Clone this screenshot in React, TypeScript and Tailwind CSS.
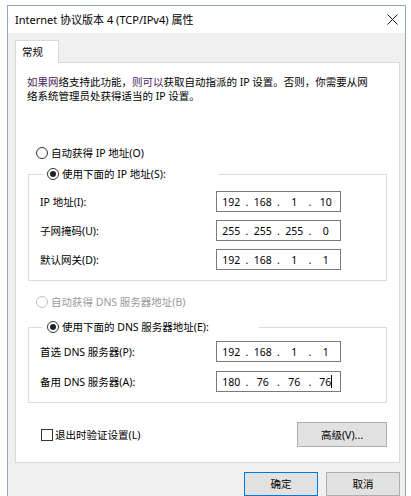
import React from "react";

const FONT = { fontFamily: "'Noto Sans', 'Noto Sans CJK SC', sans-serif" };

function Radio({ checked, disabled }: { checked?: boolean; disabled?: boolean }) {
  return (
    <span
      className={
        "flex items-center justify-center w-[12px] h-[12px] rounded-full border bg-white shrink-0 " +
        (disabled ? "border-[#c4c4c4]" : "border-[#333333]")
      }
    >
      {checked && <span className="w-[6px] h-[6px] rounded-full bg-[#222222]" />}
    </span>
  );
}

function IpBox({ parts, cursor }: { parts: string[]; cursor?: boolean }) {
  return (
    <div className="w-[125px] h-[21px] border border-[#7a7a7a] bg-white flex items-center px-[2px]">
      {parts.map((p, i) => (
        <React.Fragment key={i}>
          <span className="flex-1 text-center leading-[14px] relative">
            {p}
            {cursor && i === parts.length - 1 && (
              <span className="inline-block w-px h-[13px] bg-black align-middle -mt-[2px]" />
            )}
          </span>
          {i < parts.length - 1 && <span className="w-[7px] text-center leading-[14px]">.</span>}
        </React.Fragment>
      ))}
    </div>
  );
}

function Row({ label, parts, cursor }: { label: string; parts: string[]; cursor?: boolean }) {
  return (
    <div className="flex items-center h-[21px]">
      <span className="w-[176px] leading-[14px]">{label}</span>
      <IpBox parts={parts} cursor={cursor} />
    </div>
  );
}

export default function App() {
  return (
    <div
      className="w-[411px] h-[496px] overflow-hidden bg-white pt-[5px] pl-[7px] pr-[5px] text-[10.5px] text-black"
      style={FONT}
    >
      <div className="border-x border-t border-[#8ea6be] h-[520px] flex flex-col">
        {/* title bar */}
        <div className="h-[27px] bg-white flex items-center justify-between pl-[7px] pr-[7px] shrink-0">
          <span className="text-[11px] leading-[14px]">Internet 协议版本 4 (TCP/IPv4) 属性</span>
          <svg width="11" height="11" viewBox="0 0 11 11">
            <path d="M0.5 0.5 L10.5 10.5 M10.5 0.5 L0.5 10.5" stroke="#111" strokeWidth="1" fill="none" />
          </svg>
        </div>
        {/* body */}
        <div className="flex-1 bg-[#f0f0f0] pl-[7px] pr-[5px] pt-[7px] flex flex-col">
          <div className="flex">
            <div className="w-[44px] h-[23px] border-x border-t border-[#d9d9d9] bg-white -mb-px relative z-10 flex items-center pl-[6px]">
              <span className="leading-[14px]">常规</span>
            </div>
          </div>
          <div className="h-[401px] border border-[#d9d9d9] bg-white flex flex-col">
            <div className="mt-[12px] pl-[11px] pr-[8px] flex flex-col">
              <div className="leading-[14px] flex whitespace-nowrap">
                <span className="text-[#4a2158]">如果网</span>
                <span>络支持此功能，</span>
                <span className="text-[#4a2158]">则可以</span>
                <span>获取自动指派的 IP 设置。否则，你需要从网</span>
              </div>
              <div className="leading-[14px] whitespace-nowrap">络系统管理员处获得适当的 IP 设置。</div>
            </div>

            <div className="mt-[43px] ml-[20px] h-[14px] flex items-center gap-[3px]">
              <Radio />
              <span className="leading-[14px]">自动获得 IP 地址(O)</span>
            </div>

            <fieldset className="mt-[7px] mx-[12px] border border-[#dcdcdc] pl-[11px] pt-[10px] pb-[10px]">
              <legend className="ml-[3px] w-[176px] pl-[4px] flex items-center gap-[3px] h-[14px]">
                <Radio checked />
                <span className="leading-[14px]">使用下面的 IP 地址(S):</span>
              </legend>
              <div className="flex flex-col gap-[8px]">
                <Row label="IP 地址(I):" parts={["192", "168", "1", "10"]} />
                <Row label="子网掩码(U):" parts={["255", "255", "255", "0"]} />
                <Row label="默认网关(D):" parts={["192", "168", "1", "1"]} />
              </div>
            </fieldset>

            <div className="mt-[14px] ml-[20px] h-[14px] flex items-center gap-[3px] text-[#9a9a9a]">
              <Radio disabled />
              <span className="leading-[14px]">自动获得 DNS 服务器地址(B)</span>
            </div>

            <fieldset className="mt-[11px] mx-[12px] border border-[#dcdcdc] pl-[11px] pt-[7px] pb-[10px]">
              <legend className="ml-[3px] w-[216px] pl-[4px] flex items-center gap-[3px] h-[14px]">
                <Radio checked />
                <span className="leading-[14px]">使用下面的 DNS 服务器地址(E):</span>
              </legend>
              <div className="flex flex-col gap-[9px]">
                <Row label="首选 DNS 服务器(P):" parts={["192", "168", "1", "1"]} />
                <Row label="备用 DNS 服务器(A):" parts={["180", "76", "76", "76"]} cursor />
              </div>
            </fieldset>

            <div className="mt-[19px] h-[25px] flex items-center justify-between">
              <div className="ml-[25px] flex items-center gap-[2px]">
                <span className="w-[12px] h-[12px] border border-[#333333] bg-white" />
                <span className="leading-[14px]">退出时验证设置(L)</span>
              </div>
              <div className="mr-[12px] w-[90px] h-[25px] border border-[#adadad] bg-[#e1e1e1] flex items-center justify-center">
                <span className="leading-[14px]">高级(V)...</span>
              </div>
            </div>
          </div>

          <div className="mt-[9px] flex justify-end gap-[8px]">
            <div className="w-[74px] h-[24px] border border-[#0078d7] bg-[#e1e1e1] flex items-center justify-center">
              <span className="leading-[14px]">确定</span>
            </div>
            <div className="w-[74px] h-[24px] border border-[#adadad] bg-[#e1e1e1] flex items-center justify-center">
              <span className="leading-[14px]">取消</span>
            </div>
          </div>
        </div>
      </div>
    </div>
  );
}
